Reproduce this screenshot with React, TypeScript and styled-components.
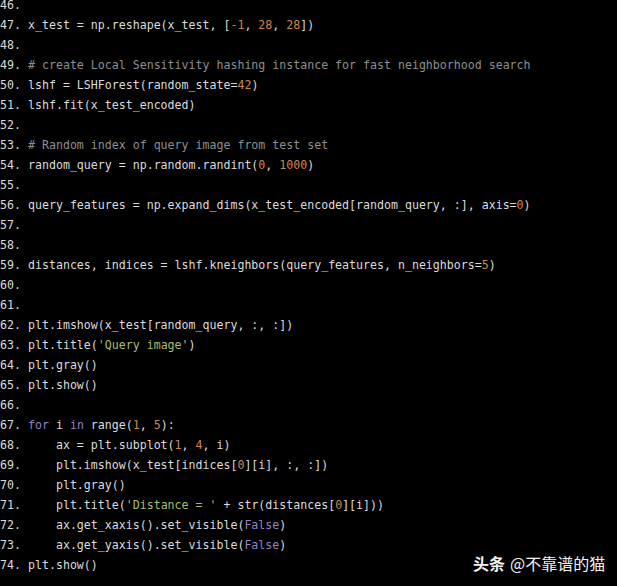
import React from "react";
import styled, { createGlobalStyle } from "styled-components";

const GlobalStyle = createGlobalStyle`
  html, body {
    margin: 0;
    padding: 0;
    background: #000;
    overflow: hidden;
  }
`;

const Page = styled.div`
  position: relative;
  width: 617px;
  height: 586px;
  background: #000;
  overflow: hidden;
`;

const Code = styled.div`
  display: flex;
  flex-direction: column;
  margin-top: -5px;
  font-family: "DejaVu Sans Mono", "Liberation Mono", monospace;
  font-size: 11.6px;
  color: #dcdcdc;
`;

const Row = styled.div`
  display: flex;
  height: 20px;
  line-height: 20px;
  white-space: pre;
`;

const LineNo = styled.span`
  width: 28px;
  flex: none;
  color: #dcdcdc;
`;

const Text = styled.span`
  white-space: pre;
`;

type Kind = "comment" | "string" | "keyword" | "number";

const colors: Record<Kind, string> = {
  comment: "#8f8f8f",
  string: "#a9bf6a",
  keyword: "#9184c6",
  number: "#cf8650",
};

const Token = styled.span<{ $kind: Kind }>`
  color: ${(p) => colors[p.$kind]};
`;

const Watermark = styled.div`
  position: absolute;
  left: 473px;
  top: 552px;
  display: flex;
  align-items: baseline;
  gap: 5px;
  font-family: "Noto Sans CJK SC", sans-serif;
  font-size: 16px;
  line-height: 22px;
  color: #f2f2f2;
  text-shadow: 0 0 2px rgba(0, 0, 0, 0.6);
`;

const Brand = styled.span`
  font-weight: 700;
`;

const lines: string[] = [
  "",
  "x_test = np.reshape(x_test, [-1, 28, 28])",
  "",
  "# create Local Sensitivity hashing instance for fast neighborhood search",
  "lshf = LSHForest(random_state=42)",
  "lshf.fit(x_test_encoded)",
  "",
  "# Random index of query image from test set",
  "random_query = np.random.randint(0, 1000)",
  "",
  "query_features = np.expand_dims(x_test_encoded[random_query, :], axis=0)",
  "",
  "",
  "distances, indices = lshf.kneighbors(query_features, n_neighbors=5)",
  "",
  "",
  "plt.imshow(x_test[random_query, :, :])",
  "plt.title('Query image')",
  "plt.gray()",
  "plt.show()",
  "",
  "for i in range(1, 5):",
  "    ax = plt.subplot(1, 4, i)",
  "    plt.imshow(x_test[indices[0][i], :, :])",
  "    plt.gray()",
  "    plt.title('Distance = ' + str(distances[0][i]))",
  "    ax.get_xaxis().set_visible(False)",
  "    ax.get_yaxis().set_visible(False)",
  "plt.show()",
];

const tokenRe = /(#.*$)|('[^']*')|(\b(?:for|in|False|True)\b)|(-?\b\d+\b)/g;

function highlight(src: string): React.ReactNode[] {
  const out: React.ReactNode[] = [];
  let last = 0;
  let m: RegExpExecArray | null;
  let k = 0;
  tokenRe.lastIndex = 0;
  while ((m = tokenRe.exec(src)) !== null) {
    if (m.index > last) out.push(src.slice(last, m.index));
    const kind: Kind = m[1] ? "comment" : m[2] ? "string" : m[3] ? "keyword" : "number";
    out.push(
      <Token key={k++} $kind={kind}>
        {m[0]}
      </Token>
    );
    last = m.index + m[0].length;
  }
  if (last < src.length) out.push(src.slice(last));
  return out;
}

export default function App() {
  return (
    <>
      <GlobalStyle />
      <Page>
        <Code>
          {lines.map((l, i) => (
            <Row key={i}>
              <LineNo>{46 + i}.</LineNo>
              <Text>{highlight(l)}</Text>
            </Row>
          ))}
        </Code>
        <Watermark>
          <Brand>头条</Brand>
          <span>@不靠谱的猫</span>
        </Watermark>
      </Page>
    </>
  );
}
